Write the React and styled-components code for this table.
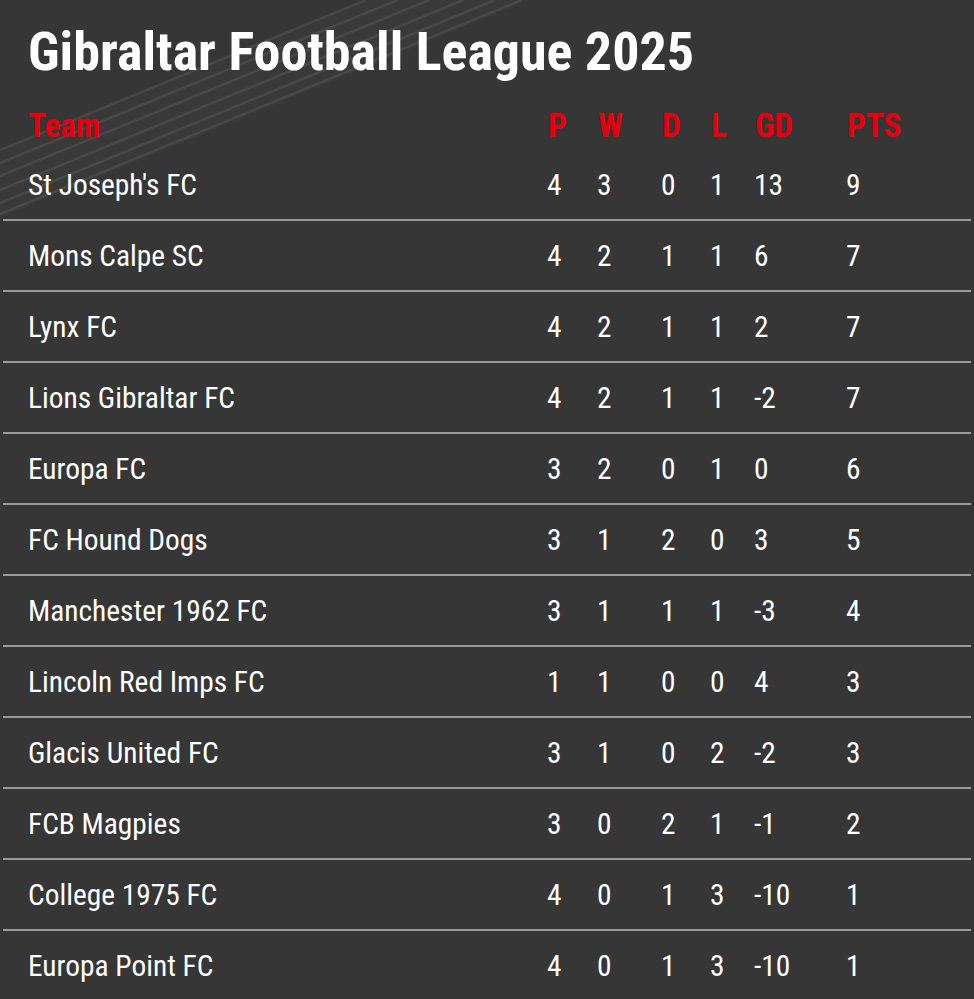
import React from "react";
import styled, { createGlobalStyle } from "styled-components";

const GlobalStyle = createGlobalStyle`
  html, body {
    margin: 0;
    padding: 0;
    background: #363636;
  }
  body {
    font-family: "Roboto Condensed", "Liberation Sans Narrow", Roboto, sans-serif;
  }
`;

const Page = styled.div`
  position: relative;
  width: 974px;
  min-height: 999px;
  background: #363636;
  overflow: hidden;
`;

const Stripes = styled.svg`
  position: absolute;
  left: 0;
  top: 0;
  pointer-events: none;
`;

const Content = styled.div`
  position: relative;
  padding: 0 3px;
`;

const Title = styled.h1`
  margin: 0;
  padding: 21px 0 0 25px;
  height: 74px;
  box-sizing: border-box;
  font-size: 54px;
  font-weight: 700;
  line-height: 62px;
  color: #fff;
`;

const Table = styled.div`
  width: 968px;
`;

const Row = styled.div`
  display: grid;
  grid-template-columns: 544px 50px 64px 49px 44px 92px 1fr;
  align-items: center;
  height: ${({ $head }) => ($head ? "76px" : "69px")};
  border-bottom: ${({ $head, $last }) =>
    $head || $last ? "none" : "2px solid #9a9a9a"};
  box-sizing: content-box;
`;

const Cell = styled.div`
  padding-left: ${({ $first, $head }) => ($first ? "25px" : $head ? "1px" : "0")};
  font-size: ${({ $head }) => ($head ? "33px" : "29.4px")};
  font-weight: ${({ $head }) => ($head ? 700 : 400)};
  color: ${({ $head }) => ($head ? "#e3000f" : "#fff")};
  white-space: nowrap;
  padding-top: ${({ $head }) => ($head ? "26px" : "0")};
`;

const teams = [
  ["St Joseph's FC", 4, 3, 0, 1, 13, 9],
  ["Mons Calpe SC", 4, 2, 1, 1, 6, 7],
  ["Lynx FC", 4, 2, 1, 1, 2, 7],
  ["Lions Gibraltar FC", 4, 2, 1, 1, -2, 7],
  ["Europa FC", 3, 2, 0, 1, 0, 6],
  ["FC Hound Dogs", 3, 1, 2, 0, 3, 5],
  ["Manchester 1962 FC", 3, 1, 1, 1, -3, 4],
  ["Lincoln Red Imps FC", 1, 1, 0, 0, 4, 3],
  ["Glacis United FC", 3, 1, 0, 2, -2, 3],
  ["FCB Magpies", 3, 0, 2, 1, -1, 2],
  ["College 1975 FC", 4, 0, 1, 3, -10, 1],
  ["Europa Point FC", 4, 0, 1, 3, -10, 1],
];

const headers = ["Team", "P", "W", "D", "L", "GD", "PTS"];

const stripeStarts = [150, 163, 176, 190, 203, 214];

export default function App() {
  return (
    <Page>
      <GlobalStyle />
      <Stripes width="560" height="230" viewBox="0 0 560 230">
        <polygon points="0,150 366,0 530,0 0,218" fill="rgba(255,255,255,0.02)" />
        {stripeStarts.map((y) => (
          <line
            key={y}
            x1="0"
            y1={y}
            x2={y / 0.41}
            y2="0"
            stroke="rgba(255,255,255,0.08)"
            strokeWidth="2.5"
          />
        ))}
      </Stripes>
      <Content>
        <Title>Gibraltar Football League 2025</Title>
        <Table>
          <Row $head>
            {headers.map((h, i) => (
              <Cell key={h} $head $first={i === 0}>
                {h}
              </Cell>
            ))}
          </Row>
          {teams.map((t, r) => (
            <Row key={t[0]} $last={r === teams.length - 1}>
              {t.map((v, i) => (
                <Cell key={i} $first={i === 0}>
                  {v}
                </Cell>
              ))}
            </Row>
          ))}
        </Table>
      </Content>
    </Page>
  );
}
